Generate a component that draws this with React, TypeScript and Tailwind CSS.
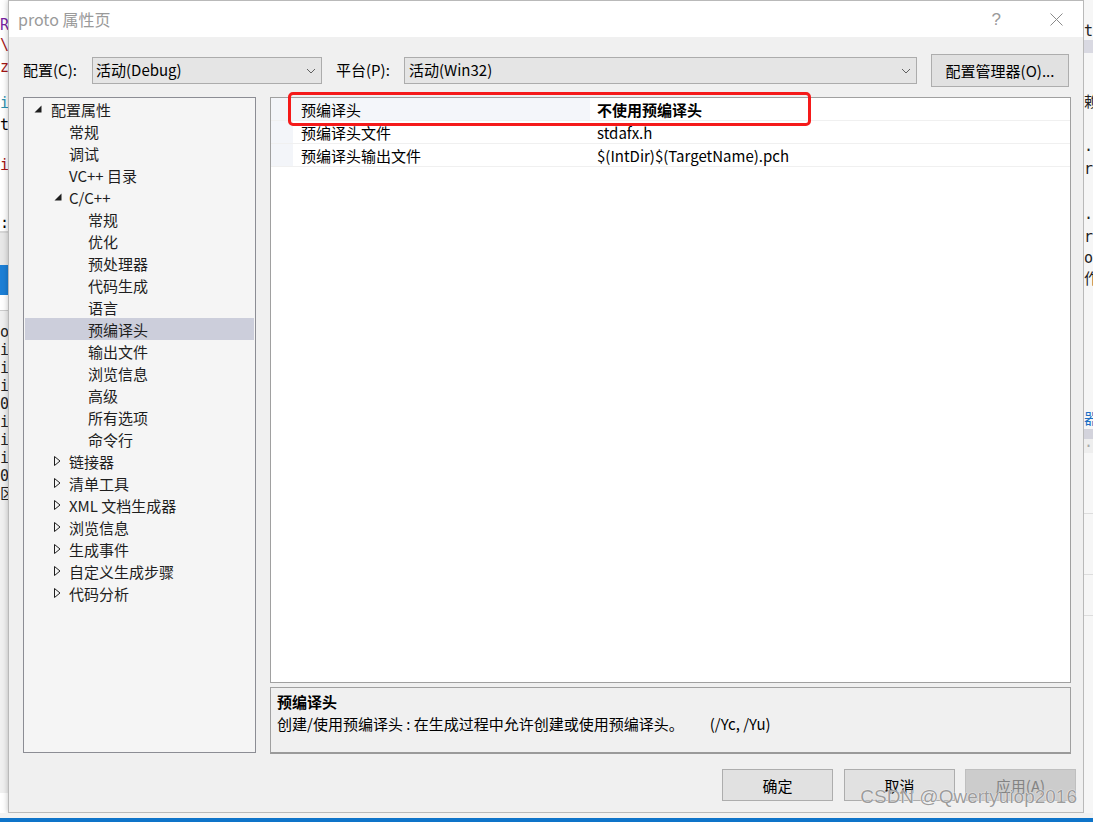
import React from 'react';

type TreeNode = {
  label: string;
  level: 0 | 1 | 2;
  icon?: 'open' | 'closed';
  selected?: boolean;
};

const tree: TreeNode[] = [
  { label: '配置属性', level: 0, icon: 'open' },
  { label: '常规', level: 1 },
  { label: '调试', level: 1 },
  { label: 'VC++ 目录', level: 1 },
  { label: 'C/C++', level: 1, icon: 'open' },
  { label: '常规', level: 2 },
  { label: '优化', level: 2 },
  { label: '预处理器', level: 2 },
  { label: '代码生成', level: 2 },
  { label: '语言', level: 2 },
  { label: '预编译头', level: 2, selected: true },
  { label: '输出文件', level: 2 },
  { label: '浏览信息', level: 2 },
  { label: '高级', level: 2 },
  { label: '所有选项', level: 2 },
  { label: '命令行', level: 2 },
  { label: '链接器', level: 1, icon: 'closed' },
  { label: '清单工具', level: 1, icon: 'closed' },
  { label: 'XML 文档生成器', level: 1, icon: 'closed' },
  { label: '浏览信息', level: 1, icon: 'closed' },
  { label: '生成事件', level: 1, icon: 'closed' },
  { label: '自定义生成步骤', level: 1, icon: 'closed' },
  { label: '代码分析', level: 1, icon: 'closed' },
];

const props = [
  { name: '预编译头', value: '不使用预编译头', bold: true },
  { name: '预编译头文件', value: 'stdafx.h' },
  { name: '预编译头输出文件', value: '$(IntDir)$(TargetName).pch' },
];

// bits of the code editor that peek out behind the dialog
const leftBits: { h: number; ch?: string; color?: string; bg?: string }[] = [
  { h: 15 },
  { h: 20, ch: 'R', color: '#7a1fa2' },
  { h: 20, ch: '\\', color: '#a31515' },
  { h: 24, ch: 'z', color: '#a31515' },
  { h: 14 },
  { h: 20, ch: 'i', color: '#2b91af' },
  { h: 24, ch: 't', color: '#000' },
  { h: 18 },
  { h: 20, ch: 'i', color: '#a31515' },
  { h: 40 },
  { h: 16, ch: ':', color: '#000' },
  { h: 2, bg: '#d6d6d6' },
  { h: 32, bg: '#e8e8e8' },
  { h: 30, bg: '#1c7fd6' },
  { h: 15, bg: '#ffffff' },
  { h: 1, bg: '#cccccc' },
  { h: 12, bg: '#f0f0f0' },
  { h: 18, ch: 'o', bg: '#f0f0f0' },
  { h: 18, ch: 'i', bg: '#f0f0f0' },
  { h: 18, ch: 'i', bg: '#f0f0f0' },
  { h: 18, ch: 'i', bg: '#f0f0f0' },
  { h: 18, ch: '0', bg: '#f0f0f0' },
  { h: 18, ch: 'i', bg: '#f0f0f0' },
  { h: 18, ch: 'i', bg: '#f0f0f0' },
  { h: 18, ch: 'i', bg: '#f0f0f0' },
  { h: 18, ch: '0', bg: '#f0f0f0' },
  { h: 18, ch: '区', bg: '#f0f0f0' },
  { h: 290, bg: '#f0f0f0' },
];

const rightBits: { h: number; ch?: string; color?: string; bg?: string }[] = [
  { h: 22 },
  { h: 18, ch: 't' },
  { h: 13, bg: '#d9d9e2' },
  { h: 40 },
  { h: 18, ch: '赖' },
  { h: 30 },
  { h: 18, ch: '·F' },
  { h: 20, ch: 'rs' },
  { h: 30 },
  { h: 18, ch: '·F' },
  { h: 20, ch: 'rs' },
  { h: 22, ch: 'ot' },
  { h: 20, ch: '作' },
  { h: 120 },
  { h: 20, ch: '器', color: '#1c6fc4' },
  { h: 10, bg: '#d3d3dc' },
  { h: 14, ch: '··', color: '#aaa', bg: '#eeeeee' },
  { h: 60, bg: '#f7f7f7' },
  { h: 1, bg: '#dddddd' },
  { h: 60 },
  { h: 1, bg: '#dddddd' },
  { h: 40 },
  { h: 1, bg: '#dddddd' },
  { h: 300 },
];

function Chevron() {
  return (
    <svg width="10" height="6" viewBox="0 0 10 6" className="shrink-0">
      <polyline points="1,1 5,5 9,1" fill="none" stroke="#606060" strokeWidth="1" />
    </svg>
  );
}

function TreeIcon({ kind }: { kind: 'open' | 'closed' }) {
  if (kind === 'open') {
    return (
      <svg width="8" height="8" viewBox="0 0 8 8">
        <polygon points="7.5,0.5 7.5,7.5 0.5,7.5" fill="#1e1e1e" />
      </svg>
    );
  }
  return (
    <svg width="7" height="10" viewBox="0 0 7 10">
      <polygon points="0.5,0.5 6,5 0.5,9.5" fill="none" stroke="#1e1e1e" strokeWidth="1" />
    </svg>
  );
}

function Strip({ bits, width }: { bits: typeof leftBits; width: string }) {
  return (
    <div className={`${width} shrink-0 overflow-hidden flex flex-col font-['DejaVu_Sans_Mono','Noto_Sans_CJK_SC',monospace] text-[15px]`}>
      {bits.map((b, i) => (
        <div
          key={i}
          className="flex items-center whitespace-nowrap leading-none"
          style={{ height: b.h, minHeight: b.h, color: b.color ?? '#222', background: b.bg }}
        >
          {b.ch}
        </div>
      ))}
    </div>
  );
}

function Button({ children, disabled }: { children: React.ReactNode; disabled?: boolean }) {
  return (
    <button
      className={`w-[111px] h-[32px] border text-[15px] leading-none ${
        disabled
          ? 'bg-[#cccccc] border-[#bfbfbf] text-[#838383]'
          : 'bg-[#e1e1e1] border-[#adadad] text-black'
      }`}
    >
      {children}
    </button>
  );
}

export default function App() {
  return (
    <div className="w-[1093px] h-[822px] overflow-hidden flex flex-col bg-white font-['Microsoft_YaHei_UI','Noto_Sans_CJK_SC',sans-serif] text-[15px] text-black">
      <div className="flex h-[813px]">
        <Strip bits={leftBits} width="w-[8px]" />

        {/* dialog */}
        <div className="w-[1076px] shrink-0 flex flex-col border border-[#b9b9b9] shadow-[0_0_6px_rgba(0,0,0,0.25)] bg-[#f0f0f0]">
          {/* title bar */}
          <div className="h-[36px] bg-white flex items-center pl-[9px] pr-[20px]">
            <span className="text-[16px] text-[#9a9a9a] leading-none">proto 属性页</span>
            <span className="ml-auto text-[17px] text-[#9a9a9a] leading-none mr-[49px] font-['Liberation_Sans',sans-serif]">?</span>
            <svg width="13" height="13" viewBox="0 0 13 13">
              <path d="M0.5 0.5 L12.5 12.5 M12.5 0.5 L0.5 12.5" stroke="#8a8a8a" strokeWidth="1" />
            </svg>
          </div>

          {/* configuration row */}
          <div className="mt-[17px] h-[33px] pl-[14px] flex items-center">
            <span className="w-[69px]">配置(C):</span>
            <div className="w-[230px] h-[27px] bg-[#e5e5e5] border border-[#acacac] flex items-center pl-[3px] pr-[5px]">
              <span className="flex-1">活动(Debug)</span>
              <Chevron />
            </div>
            <span className="ml-[14px] w-[68px]">平台(P):</span>
            <div className="w-[513px] h-[27px] bg-[#e5e5e5] border border-[#acacac] flex items-center pl-[4px] pr-[5px]">
              <span className="flex-1">活动(Win32)</span>
              <Chevron />
            </div>
            <button className="ml-[14px] w-[138px] h-[33px] bg-[#e1e1e1] border border-[#adadad] leading-none">
              配置管理器(O)...
            </button>
          </div>

          {/* main area */}
          <div className="mt-[10px] pl-[14px] flex gap-[14px]">
            {/* tree */}
            <div className="w-[233px] h-[656px] bg-[#f5f5f5] border border-[#8c8d94]">
              {tree.map((n, i) => {
                const pad = n.level === 0 ? 'pl-[9px]' : n.level === 1 ? 'pl-[29px]' : 'pl-[48px]';
                const box = n.level === 0 ? 'w-[17px]' : 'w-[15px]';
                return (
                  <div
                    key={i}
                    className={`mx-[1px] h-[22px] flex items-center ${pad} ${n.selected ? 'bg-[#cccedb]' : ''}`}
                  >
                    <div className={`${box} shrink-0 flex items-center`}>
                      {n.icon && <TreeIcon kind={n.icon} />}
                    </div>
                    <span className="leading-none text-[#1e1e1e] whitespace-nowrap">{n.label}</span>
                  </div>
                );
              })}
            </div>

            {/* right column */}
            <div className="w-[801px] flex flex-col">
              <div className="relative h-[586px] bg-white border border-[#a0a0a0]">
                {props.map((p, i) => (
                  <div key={i} className="flex h-[23px] border-b border-[#f0f0f0]">
                    <div className="w-[22px] bg-[#f3f5f9]" />
                    <div
                      className={`w-[297px] pl-[8px] flex items-center leading-none ${i === 0 ? 'bg-[#f4f6fa]' : ''}`}
                    >
                      {p.name}
                    </div>
                    <div className={`flex-1 pl-[7px] flex items-center leading-none ${p.bold ? 'font-bold' : ''}`}>
                      {p.value}
                    </div>
                  </div>
                ))}
                {/* red annotation box */}
                <div className="absolute left-[17px] top-[-6px] w-[523px] h-[34px] border-[3px] border-[#f51a1a] rounded-[5px]" />
              </div>

              <div className="mt-[4px] h-[67px] bg-[#f0f0f0] border border-[#a0a0a0] border-b-2 border-b-[#9a9a9a] pl-[6px] pt-[2px]">
                <div className="h-[22px] flex items-center font-bold leading-none">预编译头</div>
                <div className="h-[22px] flex items-center leading-none whitespace-nowrap">
                  <span>创建/使用预编译头 : 在生成过程中允许创建或使用预编译头。</span>
                  <span className="ml-[26px]">(/Yc, /Yu)</span>
                </div>
              </div>
            </div>
          </div>

          {/* buttons */}
          <div className="relative mt-[15px] pr-[7px] flex justify-end">
            <Button>确定</Button>
            <div className="ml-[11px]">
              <Button>取消</Button>
            </div>
            <div className="ml-[10px]">
              <Button disabled>应用(A)</Button>
            </div>
            <span className="absolute right-[6px] top-[18px] text-[19px] leading-none font-['Liberation_Sans',sans-serif] text-[#9c9c9c] [text-shadow:0_0_1px_#ffffff,0_0_1px_#ffffff] whitespace-nowrap">
              CSDN @Qwertyuiop2016
            </span>
          </div>
        </div>

        <Strip bits={rightBits} width="w-[9px] bg-[#f6f6f6]" />
      </div>
      <div className="h-[5px] bg-[#f2f2f2]" />
      <div className="h-[4px] bg-[#0e74c9]" />
    </div>
  );
}
